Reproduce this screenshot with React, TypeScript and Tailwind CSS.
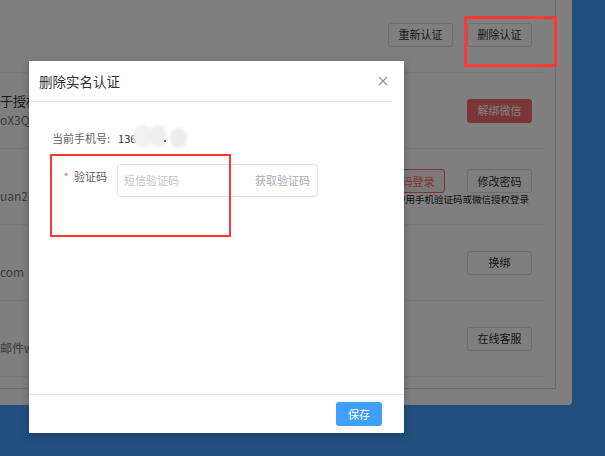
import type { ReactNode } from "react";

function Btn({ children, tone = "plain" }: { children: ReactNode; tone?: "plain" | "danger" | "dangerOutline" }) {
  const toneClass =
    tone === "danger"
      ? "border-[#f56c6c] bg-[#f56c6c] text-white"
      : tone === "dangerOutline"
      ? "border-[#f56c6c] bg-[#fef0f0] text-[#f56c6c]"
      : "border-[#dcdfe6] bg-white text-[#303133]";
  return (
    <div
      className={`flex h-[24px] w-[65px] items-center justify-center rounded-[3px] border text-[11px] leading-none ${toneClass}`}
    >
      {children}
    </div>
  );
}

function Row({ left, right }: { left?: ReactNode; right: ReactNode }) {
  return (
    <div className="flex h-[76px] items-center justify-between border-b border-[#ebeef5] pl-[12px] pr-3">
      <div className="flex flex-col">{left}</div>
      {right}
    </div>
  );
}

function InfoLines({ first, second, firstIndent = false }: { first: string; second: string; firstIndent?: boolean }) {
  return (
    <>
      <span className={`text-[13px] leading-[19px] text-[#303133] ${firstIndent ? "pl-[40px]" : ""}`}>{first}</span>
      <span className="text-[12px] leading-[20px] text-[#777]">{second}</span>
    </>
  );
}

export default function App() {
  return (
    <div className="relative h-[456px] w-[605px] overflow-hidden bg-[#429efc] font-['Noto_Sans_CJK_SC',sans-serif]">
      {/* page behind the dialog */}
      <div className="-ml-[40px] -mt-[20px] flex h-[425px] w-[612px] flex-col rounded-br-[4px] bg-white p-4">
        <div className="flex flex-1 flex-col border border-[#d9d9d9] px-[11px]">
          <Row
            right={
              <div className="flex gap-[14px]">
                <Btn>重新认证</Btn>
                <Btn>删除认证</Btn>
              </div>
            }
          />
          <Row
            left={<InfoLines first="于授权登录及消息通知" second="oX3QcWk2mLw9xT" />}
            right={<Btn tone="danger">解绑微信</Btn>}
          />
          <Row
            left={<InfoLines first="登录密码" second="uan2@163.com" firstIndent />}
            right={
              <div className="flex flex-col items-end pt-[1px]">
                <div className="flex gap-[22px]">
                  <Btn tone="dangerOutline">密码登录</Btn>
                  <Btn>修改密码</Btn>
                </div>
                <div className="pr-[3px] text-[9.5px] leading-[12px] text-[#222]">可以使用手机验证码或微信授权登录</div>
              </div>
            }
          />
          <Row
            left={<InfoLines first="绑定邮箱" second="com" firstIndent />}
            right={<Btn>换绑</Btn>}
          />
          <Row
            left={<InfoLines first="联系客服" second="邮件we" firstIndent />}
            right={<Btn>在线客服</Btn>}
          />
        </div>
      </div>

      {/* modal mask */}
      <div className="absolute inset-0 bg-black/50" />

      {/* dialog */}
      <div className="absolute left-[29px] top-[61px] flex h-[372px] w-[375px] flex-col bg-white shadow-[0_2px_8px_rgba(0,0,0,0.25)]">
        <div className="mr-3 flex h-[41px] items-center justify-between border-b border-[#e4e7ed] pl-[10px] pr-[4px]">
          <span className="text-[13.5px] text-[#303133]">删除实名认证</span>
          <svg width="10" height="10" viewBox="0 0 10 10" fill="none" stroke="#909399" strokeWidth="1.1">
            <path d="M1 1L9 9M9 1L1 9" />
          </svg>
        </div>

        <div className="flex-1 px-[23px] pt-[28px]">
          <div className="flex h-[16px] items-center text-[11px] text-[#606266]">
            <span>当前手机号:</span>
            <span className="relative ml-[8px] text-[#303133]">
              136
              <span className="absolute left-[15px] top-[-5px] h-[22px] w-[20px] rounded-full bg-[#f0f0f0] blur-[1.5px]" />
              <span className="absolute left-[31px] top-[-5px] h-[22px] w-[17px] rounded-full bg-[#eeeeee] blur-[1.5px]" />
              <span className="absolute left-[52px] top-[-2px] h-[20px] w-[17px] rounded-full bg-[#ececec] blur-[1.5px]" />
              <span className="absolute left-[46px] top-[10px] h-[2px] w-[2px] bg-[#666]" />
            </span>
          </div>

          <div className="mt-[18px] flex">
            <div className="flex w-[65px] justify-end gap-[5px] pr-[10px] text-[11px] leading-[24px] text-[#606266]">
              <span className="text-[#f56c6c]">*</span>
              <span>验证码</span>
            </div>
            <div className="flex h-[33px] w-[201px] items-center justify-between rounded-[4px] border border-[#dcdfe6] pl-[6px] pr-[7px] text-[11px]">
              <span className="text-[#c0c4cc]">短信验证码</span>
              <span className="text-[#a8abb2]">获取验证码</span>
            </div>
          </div>
        </div>

        <div className="flex justify-end border-t border-[#e4e7ed] pb-[7px] pr-[22px] pt-[7px]">
          <div className="flex h-[24px] w-[46px] items-center justify-center rounded-[3px] bg-[#409eff] text-[11px] text-white">
            保存
          </div>
        </div>
      </div>

      {/* red annotation boxes */}
      <div className="absolute left-[464px] top-[16px] h-[51px] w-[93px] border-[3px] border-[#ff3636]" />
      <div className="absolute left-[50px] top-[154px] h-[83px] w-[181px] border-[2.5px] border-[#ff3636]" />
    </div>
  );
}
